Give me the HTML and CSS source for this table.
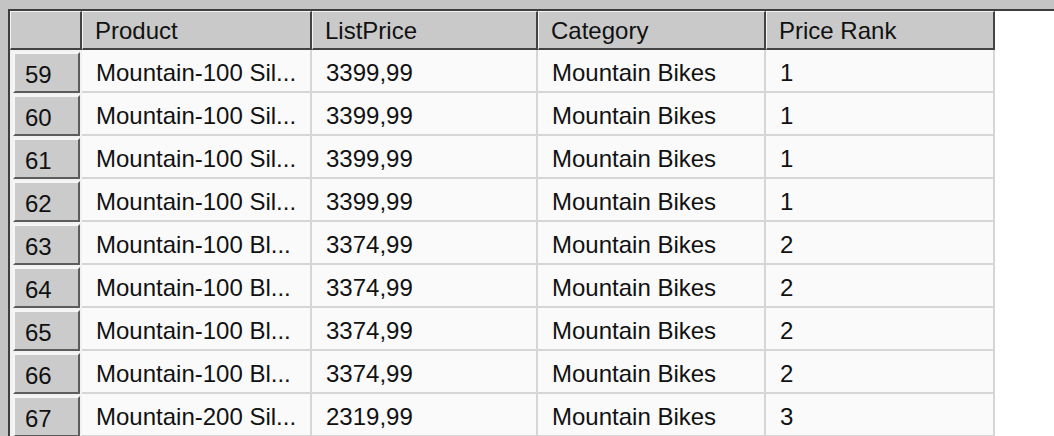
FILE: index.html
```html
<!DOCTYPE html>
<html lang="en">
<head>
<meta charset="utf-8">
<title>Results</title>
<link rel="stylesheet" href="styles.css">
</head>
<body>
<div class="window">
  <div class="frame">
    <div class="grid">
      <div class="hcell corner"></div>
      <div class="hcell">Product</div>
      <div class="hcell">ListPrice</div>
      <div class="hcell">Category</div>
      <div class="hcell">Price Rank</div>

      <div class="rowhead"><div class="rbtn">59</div></div>
      <div class="cell">Mountain-100 Sil...</div><div class="cell">3399,99</div><div class="cell">Mountain Bikes</div><div class="cell">1</div>

      <div class="rowhead"><div class="rbtn">60</div></div>
      <div class="cell">Mountain-100 Sil...</div><div class="cell">3399,99</div><div class="cell">Mountain Bikes</div><div class="cell">1</div>

      <div class="rowhead"><div class="rbtn">61</div></div>
      <div class="cell">Mountain-100 Sil...</div><div class="cell">3399,99</div><div class="cell">Mountain Bikes</div><div class="cell">1</div>

      <div class="rowhead"><div class="rbtn">62</div></div>
      <div class="cell">Mountain-100 Sil...</div><div class="cell">3399,99</div><div class="cell">Mountain Bikes</div><div class="cell">1</div>

      <div class="rowhead"><div class="rbtn">63</div></div>
      <div class="cell">Mountain-100 Bl...</div><div class="cell">3374,99</div><div class="cell">Mountain Bikes</div><div class="cell">2</div>

      <div class="rowhead"><div class="rbtn">64</div></div>
      <div class="cell">Mountain-100 Bl...</div><div class="cell">3374,99</div><div class="cell">Mountain Bikes</div><div class="cell">2</div>

      <div class="rowhead"><div class="rbtn">65</div></div>
      <div class="cell">Mountain-100 Bl...</div><div class="cell">3374,99</div><div class="cell">Mountain Bikes</div><div class="cell">2</div>

      <div class="rowhead"><div class="rbtn">66</div></div>
      <div class="cell">Mountain-100 Bl...</div><div class="cell">3374,99</div><div class="cell">Mountain Bikes</div><div class="cell">2</div>

      <div class="rowhead"><div class="rbtn">67</div></div>
      <div class="cell">Mountain-200 Sil...</div><div class="cell">2319,99</div><div class="cell">Mountain Bikes</div><div class="cell">3</div>
    </div>
  </div>
</div>
</body>
</html>
```
FILE: styles.css
```css
html, body {
  margin: 0;
  padding: 0;
  background: #ffffff;
  overflow: hidden;
}

.window {
  box-sizing: border-box;
  height: 436px;
  width: 1054px;
  padding: 9px 0 0 8px;
  background: #c4c4c4;
  font-family: "Liberation Sans", Arial, sans-serif;
  font-size: 24px;
  color: #111111;
}

.frame {
  box-sizing: border-box;
  height: 100%;
  border-top: 2px solid #3e3e3e;
  border-left: 2px solid #3e3e3e;
  background: #ffffff;
  overflow: hidden;
}

.grid {
  display: grid;
  grid-template-columns: 72px 230px 226px 228px 229px;
  grid-template-rows: 39px repeat(9, 43px);
  width: max-content;
}

.hcell {
  box-sizing: border-box;
  display: flex;
  align-items: center;
  padding-left: 12px;
  padding-top: 1px;
  background: #c9c9c9;
  border-top: 1px solid #f4f4f4;
  border-left: 1px solid #f4f4f4;
  border-right: 2px solid #434343;
  border-bottom: 2px solid #434343;
  white-space: nowrap;
}

.rowhead {
  box-sizing: border-box;
  display: flex;
  padding: 2px 2px 0 3px;
  background: #f2f2f2;
}

.rbtn {
  box-sizing: border-box;
  flex: 1;
  display: flex;
  align-items: center;
  padding-left: 10px;
  padding-top: 4px;
  background: #cbcbcb;
  border-top: 2px solid #f6f6f6;
  border-left: 2px solid #f6f6f6;
  border-right: 2px solid #5c5c5c;
  border-bottom: 2px solid #5c5c5c;
}

.cell {
  box-sizing: border-box;
  display: flex;
  align-items: center;
  padding-left: 14px;
  padding-top: 4px;
  background: #fafafa;
  border-right: 2px solid #d6d6d6;
  border-bottom: 2px solid #d6d6d6;
  white-space: nowrap;
  overflow: hidden;
}
```
